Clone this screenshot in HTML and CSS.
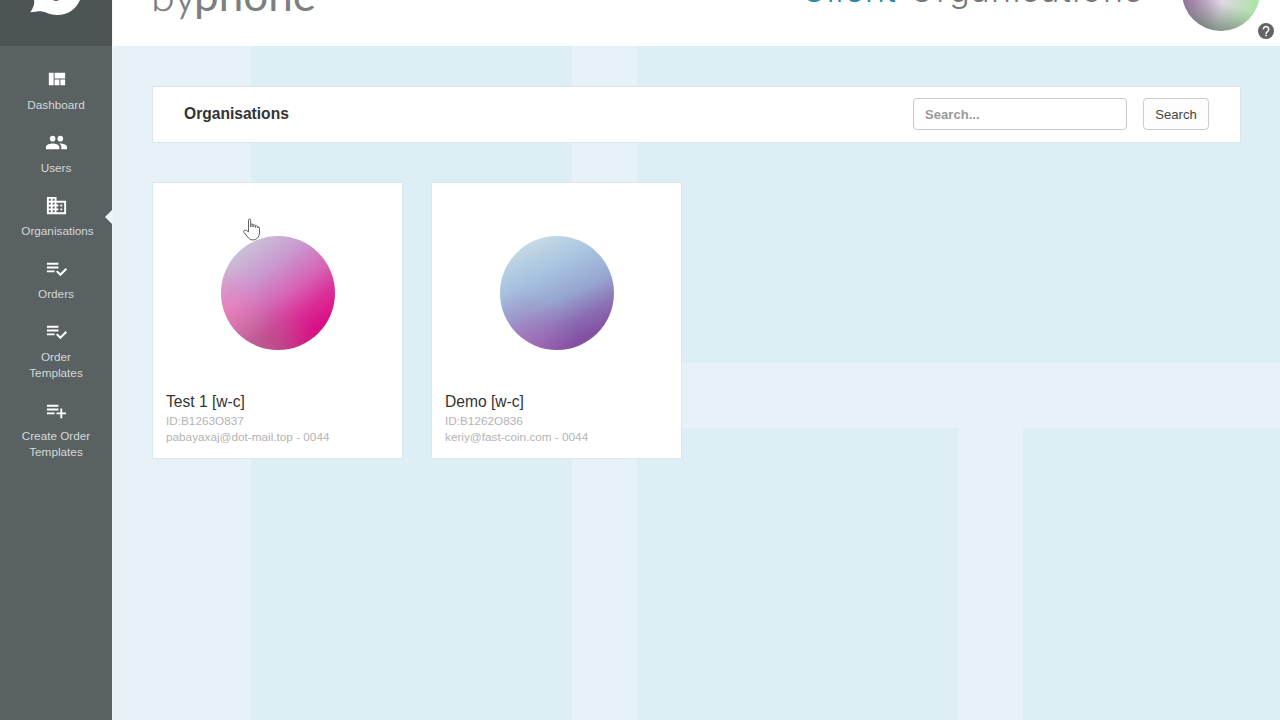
FILE: index.html
```html
<!DOCTYPE html>
<html lang="en">
<head>
<meta charset="utf-8">
<title>Client Organisations</title>
<link rel="stylesheet" href="styles.css">
</head>
<body>
<div class="app">
  <aside class="sidebar">
    <div class="brand">
      <svg width="112" height="46" viewBox="0 0 112 46"><path fill="#fff" d="M80 0C76 9 68 15 57 15C50 15 46 12 42 11.500C39 11 35 12 30.300 12.300C33 8 35 4 34 0Z"/><path fill="#4c5455" d="M53 0H59Q56 2 53 0Z"/></svg>
    </div>
    <nav class="nav">
      <a class="item"><svg class="icon" viewBox="0 0 24 24"><path d="M10 18h5v-6h-5v6zm-6 0h5V5H4v13zm12 0h5v-6h-5v6zM10 5v6h11V5H10z"/></svg><span>Dashboard</span></a>
      <a class="item"><svg class="icon" viewBox="0 0 24 24"><path d="M16 11c1.660 0 2.990-1.340 2.990-3S17.660 5 16 5c-1.660 0-3 1.340-3 3s1.340 3 3 3zm-8 0c1.660 0 2.990-1.340 2.990-3S9.660 5 8 5C6.340 5 5 6.340 5 8s1.340 3 3 3zm0 2c-2.330 0-7 1.170-7 3.500V19h14v-2.500c0-2.330-4.670-3.500-7-3.500zm8 0c-.29 0-.62.020-.97.050 1.160.84 1.970 1.970 1.970 3.450V19h6v-2.500c0-2.330-4.670-3.500-7-3.500z"/></svg><span>Users</span></a>
      <a class="item active"><svg class="icon" viewBox="0 0 24 24"><path d="M12 7V3H2v18h20V7H12zM6 19H4v-2h2v2zm0-4H4v-2h2v2zm0-4H4V9h2v2zm0-4H4V5h2v2zm4 12H8v-2h2v2zm0-4H8v-2h2v2zm0-4H8V9h2v2zm0-4H8V5h2v2zm10 12h-8v-2h2v-2h-2v-2h2v-2h-2V9h8v10zm-2-8h-2v2h2v-2zm0 4h-2v2h2v-2z"/></svg><span>Organisations</span></a>
      <a class="item"><svg class="icon" viewBox="0 0 24 24"><path d="M14 10H2v2h12v-2zm0-4H2v2h12V6zM2 16h8v-2H2v2zm19.500-4.500L23 13l-6.990 7-4.510-4.500L13 14l3.010 3 5.490-5.500z"/></svg><span>Orders</span></a>
      <a class="item"><svg class="icon" viewBox="0 0 24 24"><path d="M14 10H2v2h12v-2zm0-4H2v2h12V6zM2 16h8v-2H2v2zm19.500-4.500L23 13l-6.990 7-4.510-4.500L13 14l3.010 3 5.490-5.500z"/></svg><span>Order<br>Templates</span></a>
      <a class="item"><svg class="icon" viewBox="0 0 24 24"><path d="M14 10H2v2h12v-2zm0-4H2v2h12V6zm4 8v-4h-2v4h-4v2h4v4h2v-4h4v-2h-4zM2 16h8v-2H2v2z"/></svg><span>Create Order<br>Templates</span></a>
    </nav>
  </aside>
  <div class="main">
    <header class="header">
      <svg class="header-art" width="1167" height="46" viewBox="113 0 1167 46">
        <defs>
          <linearGradient id="av" x1="0" y1="0.600" x2="1" y2="0.800"><stop offset="0" stop-color="#a56bb0"/><stop offset=".5" stop-color="#ded8e2"/><stop offset="1" stop-color="#a5e59d"/></linearGradient>
          <linearGradient id="avs" x1="0.600" y1="0.500" x2="0.450" y2="1"><stop offset="0.300" stop-color="#5d7a62" stop-opacity="0"/><stop offset="1" stop-color="#5c7562" stop-opacity=".7"/></linearGradient>
        </defs>
        <text class="logo-light" x="151" y="10.500" textLength="45" lengthAdjust="spacingAndGlyphs">by</text>
        <text class="logo-bold" x="194" y="10.500" textLength="122" lengthAdjust="spacingAndGlyphs">phone</text>
        <text class="title title-accent" x="801" y="1.500" textLength="95" lengthAdjust="spacing">Client</text>
        <text class="title" x="909" y="1.500" textLength="233" lengthAdjust="spacing">Organisations</text>
        <circle cx="1221" cy="-8" r="39" fill="url(#av)"/>
        <circle cx="1221" cy="-8" r="39" fill="url(#avs)"/>
        <circle cx="1266" cy="31" r="8" fill="#646464"/>
        <path d="M1263.300 29.300a2.700 2.700 0 1 1 4.600 1.900c-1 1-1.900 1.200-1.900 2.700" fill="none" stroke="#fff" stroke-width="1.500"/><rect x="1265.200" y="34.700" width="1.600" height="1.600" fill="#fff"/>
      </svg>
    </header>
    <main class="content">
      <section class="panel">
        <h1>Organisations</h1>
        <form class="search"><input type="text" placeholder="Search..."><button type="button">Search</button></form>
      </section>
      <section class="cards">
        <article class="card">
          <div class="photo"><div class="ball pink"></div></div>
          <h2>Test 1 [w-c]</h2>
          <p>ID:B1263O837</p>
          <p>pabayaxaj@dot-mail.top - 0044</p>
        </article>
        <article class="card">
          <div class="photo"><div class="ball blue"></div></div>
          <h2>Demo [w-c]</h2>
          <p>ID:B1262O836</p>
          <p>keriy@fast-coin.com - 0044</p>
        </article>
      </section>
    </main>
  </div>
  <svg class="cursor" width="18" height="23" viewBox="0 0 18 23"><path d="M5.500 14V2.200Q5.500 1 6.600 1T7.700 2.200V9V6.800Q7.800 5.800 9 6Q10 6.200 10 7V9V7.300Q11 6 12.400 7.500V9.500V8Q14 7 14.700 8.700V10V9Q16.500 8.500 16.500 10.500V15Q16.500 18 14.500 20Q12.500 22 10 22Q7.500 22 6 20.500L1.200 14.700Q0 13 1.500 12.200Q3 11.500 5.500 14Z" fill="#fff" stroke="#606060" stroke-width="1"/></svg>
</div>
</body>
</html>
```
FILE: styles.css
```css
* { box-sizing: border-box; }
body { margin: 0; font-family: "Liberation Sans", Arial, sans-serif; color: #333; }
.app { display: flex; position: relative; width: 1280px; height: 720px; overflow: hidden; }

.sidebar { flex: none; width: 113px; background: #596162; border-right: 1px solid #f1f6f8; }
.brand { height: 46px; background: #4c5455; }
.brand svg { display: block; }
.nav { display: flex; flex-direction: column; gap: 17.500px; padding-top: 21.500px; }
.item { position: relative; display: flex; flex-direction: column; align-items: center; gap: 6.500px; color: #d5d8d8; font-size: 11.750px; line-height: 16px; text-align: center; }
.item.active span { padding-left: 3px; }
.icon { width: 23px; height: 23px; fill: #fff; display: block; }
.item.active::after { content: ""; position: absolute; right: 0; top: 16px; border: 7px solid transparent; border-left-width: 0; border-right-color: #eef6fa; }

.main { flex: 1; display: flex; flex-direction: column; }
.header { height: 46px; background: #fff; overflow: hidden; }
.header-art { display: block; }
.logo-light, .logo-bold { font-family: Lato, sans-serif; font-size: 44px; fill: #7b7f7f; }
.logo-light { font-weight: 300; stroke: #7b7f7f; stroke-width: .4px; }
.logo-bold { font-weight: 400; }
.title { font-family: Inter, sans-serif; font-weight: 300; font-size: 34px; fill: #777; }
.title-accent { fill: #2a8b9f; }

.content {
  flex: 1;
  padding: 40px 39px 0;
  background:
    linear-gradient(#deeef5, #deeef5) 138px 0 / 321px 100% no-repeat,
    linear-gradient(#deeef5, #deeef5) 524px 0 / 643px 317px no-repeat,
    linear-gradient(#deeef5, #deeef5) 524px 382px / 321px 100% no-repeat,
    linear-gradient(#deeef5, #deeef5) 910px 382px / 257px 100% no-repeat,
    #e7f2f8;
}
.panel { display: flex; align-items: center; justify-content: space-between; height: 57px; padding: 0 31px; background: #fff; border: 1px solid #dce6ea; }
.panel h1 { margin: 0 0 2px; font-size: 15.600px; line-height: 18px; color: #333; }
.search { display: flex; gap: 16px; margin-bottom: 1px; }
.search input { width: 214px; height: 32px; padding: 0 11px; border: 1px solid #c8c8c8; border-radius: 4px; background: #fff; font: bold 13.100px "Liberation Sans", Arial, sans-serif; }
.search input::placeholder { color: #999; opacity: 1; }
.search button { width: 66px; height: 32px; padding: 0; border: 1px solid #ccc; border-radius: 4px; background: #fdfdfd; color: #444; font: 13.100px "Liberation Sans", Arial, sans-serif; }

.cards { display: flex; gap: 28px; margin-top: 39px; }
.card { width: 251px; height: 277px; padding: 0 13px; background: #fff; border: 1px solid #dbe8ee; }
.photo { display: flex; justify-content: center; padding-top: 53px; height: 208px; }
.ball { width: 114px; height: 114px; border-radius: 50%; }
.pink {
  background:
    radial-gradient(circle at 35% 108%, rgba(174, 104, 140, .9) 0, rgba(174, 104, 140, 0) 42%),
    radial-gradient(circle at 0 72%, rgba(240, 125, 184, .9) 0, rgba(240, 125, 184, 0) 36%),
    linear-gradient(143deg, #cdc8d8 10%, #c99ad0 34%, #d664b4 54%, #da3098 68%, #d90f85 82%, #b82874 100%);
}
.blue {
  background:
    radial-gradient(circle at 22% 92%, rgba(175, 116, 189, .6) 0, rgba(175, 116, 189, 0) 36%),
    linear-gradient(155deg, #ccdde6 8%, #a8c4e0 33%, #96a6d0 54%, #8b6bb2 72%, #8450a3 84%, #7d519c 100%);
}
.card h2 { margin: 0; font-size: 15.600px; font-weight: 400; line-height: 22px; color: #333; }
.card p { margin: 0; font-size: 11.750px; line-height: 16px; color: #b3b3b3; white-space: nowrap; }

.cursor { position: absolute; left: 243px; top: 218px; }
```
